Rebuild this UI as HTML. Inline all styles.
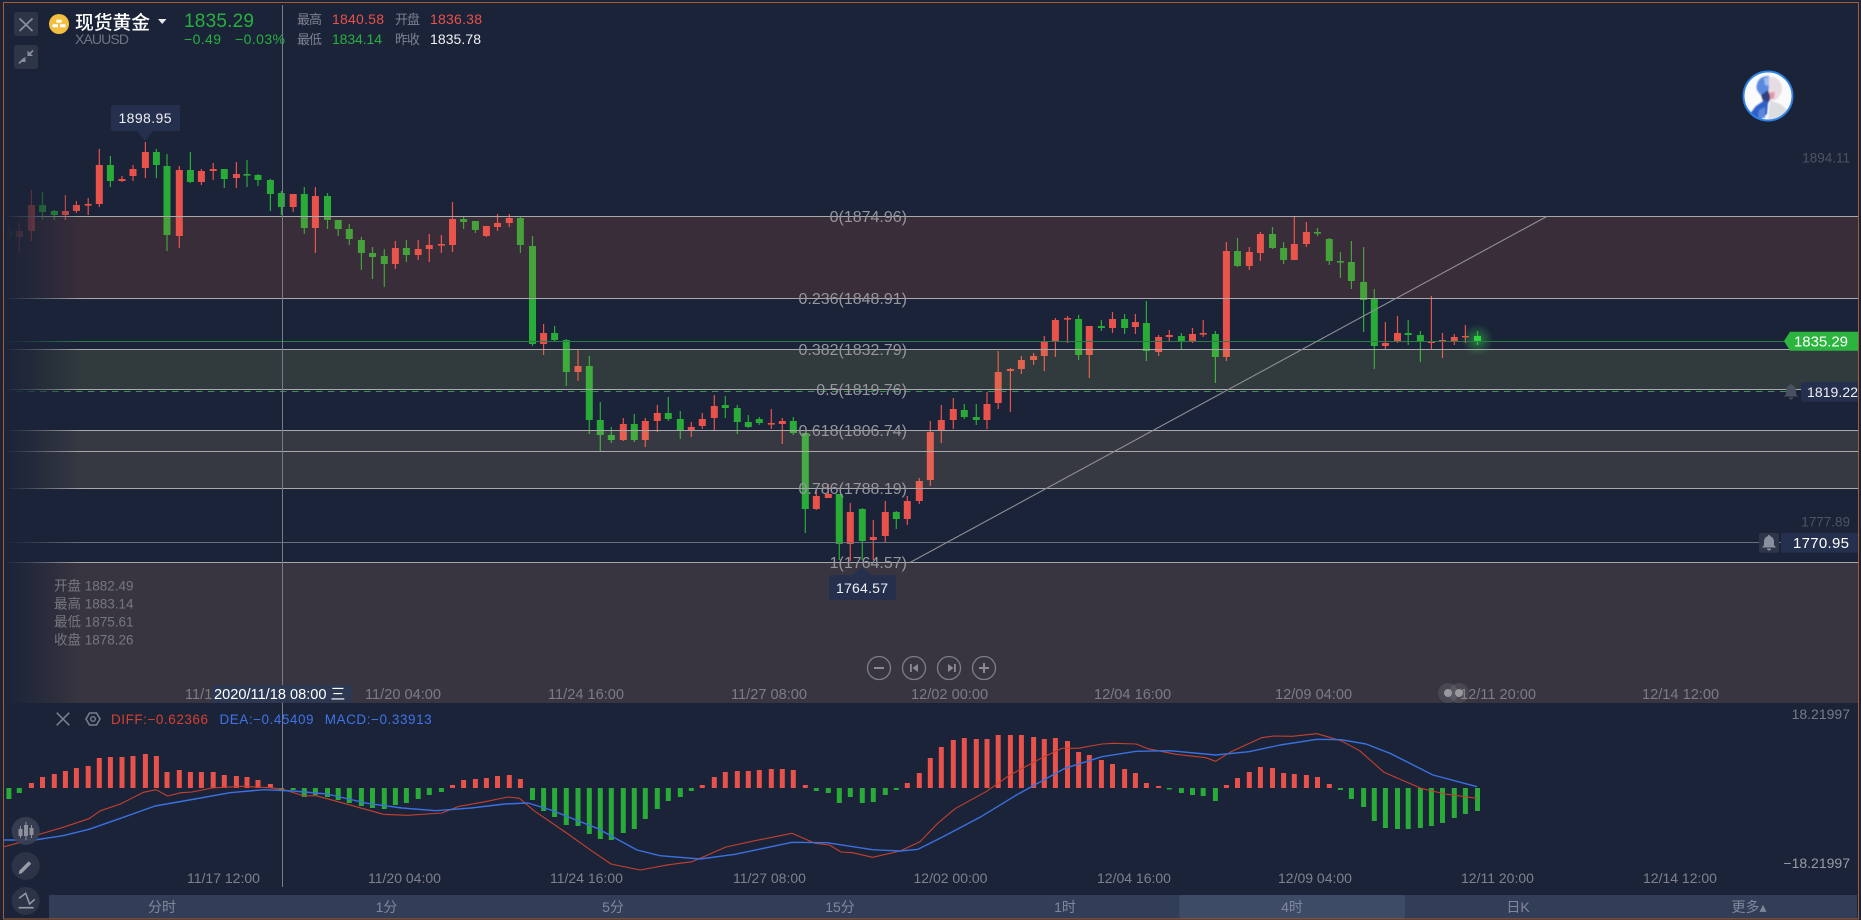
<!DOCTYPE html>
<html lang="zh">
<head>
<meta charset="utf-8">
<title>现货黄金</title>
<style>
html,body{margin:0;padding:0;background:#1b2338;width:1861px;height:920px;overflow:hidden}
svg{display:block;font-family:"Liberation Sans","Noto Sans CJK SC",sans-serif}
.wr{stroke:#e9524a;stroke-width:1.2;fill:none}
.wg{stroke:#28ab37;stroke-width:1.2;fill:none}
.br{stroke:#e9524a;stroke-width:7;fill:none}
.bg{stroke:#28ab37;stroke-width:7;fill:none}
.fib{stroke:#a9a9a9;stroke-width:1;fill:none}
.fl{font-size:16px;fill:#96969c;text-anchor:end}
.ax{font-size:14.6px;fill:#7c7c85}
.ax2{font-size:14px;fill:#7e818d}
.tab{font-size:14px;fill:#81879a;text-anchor:middle}
.h{font-size:13px;fill:#7d8191}
.n{font-size:14px}
.lg{font-size:13.5px;fill:#77777f}
</style>
</head>
<body>
<svg width="1861" height="920" viewBox="0 0 1861 920" xmlns="http://www.w3.org/2000/svg">
<defs>
<linearGradient id="fade" x1="0" x2="1" y1="0" y2="0"><stop offset="0" stop-color="#1b2338"/><stop offset=".35" stop-color="#1b2338" stop-opacity=".7"/><stop offset="1" stop-color="#1b2338" stop-opacity="0"/></linearGradient>
<radialGradient id="glow"><stop offset="0" stop-color="#35e04a" stop-opacity=".5"/><stop offset=".5" stop-color="#35e04a" stop-opacity=".22"/><stop offset="1" stop-color="#35e04a" stop-opacity="0"/></radialGradient>
<clipPath id="av"><circle cx="1768" cy="96" r="24"/></clipPath>
<filter id="soft" x="-20%" y="-20%" width="140%" height="140%"><feGaussianBlur stdDeviation="0.9"/></filter>
</defs>
<rect width="1861" height="920" fill="#1b2338"/>

<!-- candles -->
<path class="wg" d="M9 225V241M42.5 192V220M54.3 210V220M110.4 156V187M156.4 149V178M167 154V251M190.4 152V183M224.3 169V188M247 160V187M258 174V186M270.4 179V211M281.4 191V215M304.3 187V234M327.5 193V229M338.2 220V236M349.3 224V245M361.4 237V270M372.5 247V279M384.3 249V287M406.4 240V262M463.6 217V229M475.4 221V233M520.4 217V253M532.5 236V346M554.6 326V342M566.3 339V386M589.3 356V434M600.3 402V451M611.3 427V443M634.3 414V442M668.3 397V421M680.3 411V439M725.3 396V418M737.3 405V434M748.3 415V428M759.3 417V425M793.3 417V435M805.3 433V533M839.3 494V560M862.3 508V560M896.3 511V529M964.3 404V419M976.3 404V425M1078.6 315V360M1101.4 320V331M1124.6 314V334M1146.4 301V361M1181.4 333V349M1215.4 331V383M1237.5 238V267M1272.5 227V249M1283.6 242V264M1317.5 228V236M1329.3 238V265M1340.4 252V278M1351.4 241V289M1363.6 247V332M1374.3 289V369M1408.2 320V345M1420.4 331V362M1477.5 331V345"/>
<path class="bg" d="M9 231V237M42.5 205V212M54.3 211V215M110.4 165V181M156.4 152V165M167 166V235M190.4 170V182M224.3 169V179M247 174V175.6M258 175V180M270.4 180V194M281.4 193V207M304.3 194V228M327.5 196V220M338.2 220V229M349.3 229V239M361.4 240V253M372.5 253V257M384.3 256V264M406.4 248V255M463.6 219V222M475.4 221V230M520.4 218V245M532.5 246V344M554.6 333V340M566.3 340V372M589.3 366V420M600.3 420V435M611.3 435V440M634.3 424V440M668.3 413V419M680.3 419V430M725.3 405V408M737.3 408V422M748.3 422V427M759.3 419V423M793.3 421V433M805.3 433V509M839.3 494V544M862.3 509V541M896.3 512V519M964.3 410V417M976.3 417V420M1078.6 319V355M1101.4 326V328M1124.6 319V328M1146.4 323V351M1181.4 336V341M1215.4 334V357M1237.5 251V266M1272.5 234V248M1283.6 248V260M1317.5 232V233.6M1329.3 239V261M1340.4 261V262.6M1351.4 262V281M1363.6 282V300M1374.3 299V346M1408.2 333V335M1420.4 335V342"/>
<path class="wr" d="M19.3 223V253M31.4 190V241M65.4 195V220M76.4 201V213M88.2 198V215M99.3 149V207M122 176V182M133 165V181M145.4 142V178M179.3 166V248M201.4 169V185M213.2 163V180M236.4 162V188M293.2 194V212M315.4 187V253M395.4 241V269M418.2 240V260M429.3 234V262M441.4 235V253M452.5 202V252M486.4 226V237M497.5 214V231M509.3 214V227M543.6 324V355M578 350V381M623.3 418V441M645.3 418V447M657.3 405V432M691.3 422V437M702.3 413V429M714.3 395V430M771.3 409V429M782.3 418V444M816.3 490V510M828.3 484V498M850.3 503V561M873.3 520V560M885.3 501V542M907.3 496V525M919.3 478V504M930.3 421V486M941.3 405V443M953.3 398V429M987 392V429M998.2 351V409M1010.4 368V412M1021.4 356V374M1033.6 353V365M1044.3 336V371M1055.4 318V357M1067.5 316V343M1089.3 326V378M1112.5 312V333M1135.4 314V334M1158.6 335V356M1169.3 330V341M1192.5 328V343M1203.2 320V337M1226.4 242V361M1249.3 247V270M1260.4 232V261M1294.3 217V260M1306.4 222V247M1385.4 322V349M1397.5 316V343M1431.4 296V349M1442.5 333V358M1454.3 334V345M1465.4 325V343"/>
<path class="br" d="M19.3 231V237M31.4 205V231M65.4 211V215M76.4 205V211M88.2 204V205.6M99.3 165V204M122 179V181M133 169V176M145.4 152V168M179.3 170V236M201.4 171V182M213.2 169V171M236.4 174V178M293.2 194V207M315.4 196V228M395.4 248V264M418.2 249V255M429.3 245V249M441.4 244V245.6M452.5 219V245M486.4 226V236M497.5 223V227M509.3 218V223M543.6 333V344M578 366V372M623.3 424V440M645.3 421V440M657.3 413V421M691.3 427V430M702.3 419V426M714.3 406V418M771.3 423V424.6M782.3 421V424M816.3 496V509M828.3 494V498M850.3 512V544M873.3 537V540M885.3 512V536M907.3 501V519M919.3 481V501M930.3 432V480M941.3 420V430M953.3 409V420M987 404V420M998.2 372V403M1010.4 369V371M1021.4 360V369M1033.6 356V360M1044.3 342V356M1055.4 320V342M1067.5 318V319.6M1089.3 326V355M1112.5 319V328M1135.4 322V327M1158.6 337V352M1169.3 335V337M1192.5 334V341M1203.2 333V334.6M1226.4 251V357M1249.3 252V266M1260.4 234V253M1294.3 244V260M1306.4 232V244M1385.4 343V346M1397.5 333V342M1431.4 341V343M1442.5 340V341.4M1454.3 337V341M1465.4 336V337.4"/>
<circle cx="1477.5" cy="340" r="16" fill="url(#glow)"/>
<path d="M1474 336H1481V342H1474Z" fill="#2ed13f"/>

<!-- bands -->
<rect x="4" y="216" width="1855" height="82" fill="rgb(234,108,76)" fill-opacity=".15"/>
<rect x="4" y="349" width="1855" height="40" fill="rgb(180,195,96)" fill-opacity=".15"/>
<rect x="4" y="430" width="1855" height="58" fill="rgb(220,188,129)" fill-opacity=".15"/>
<rect x="4" y="562" width="1855" height="141" fill="rgb(227,162,116)" fill-opacity=".15"/>

<!-- lines -->
<path d="M4 341.5H1786" stroke="#2c7d4a" stroke-width="1" fill="none"/>
<path d="M4 391.5H1786" stroke="#3e8e4f" stroke-width="1" stroke-dasharray="6.5 5.5" fill="none"/>
<path d="M4 542.5H1759M1779 542.5H1781" stroke="#6a7080" stroke-width="1" fill="none"/>
<path class="fib" d="M4 216.5H1859M4 298.5H1859M4 349.5H1859M4 389.5H1859M4 430.5H1859M4 451.5H1859M4 488.5H1859M4 562.5H1859"/>
<path d="M910 562.5L1546.7 216.5" stroke="#8f8f93" stroke-width="1.1" fill="none"/>

<!-- fib labels -->
<text class="fl" x="907" y="222">0(1874.96)</text>
<text class="fl" x="907" y="304">0.236(1848.91)</text>
<text class="fl" x="907" y="355">0.382(1832.79)</text>
<text class="fl" x="907" y="395">0.5(1819.76)</text>
<text class="fl" x="907" y="436">0.618(1806.74)</text>
<text class="fl" x="907" y="494">0.786(1788.19)</text>
<text class="fl" x="907" y="568">1(1764.57)</text>

<!-- left fade -->
<rect x="4" y="170" width="78" height="533" fill="url(#fade)"/>

<!-- MACD panel -->
<rect x="4" y="703" width="1855" height="217" fill="#1b2338"/>
<path d="M31.4 788V783M42.5 788V777M54.3 788V774M65.4 788V771M76.4 788V768M88.2 788V766M99.3 788V758M110.4 788V757M122 788V757M133 788V756M145.4 788V754M156.4 788V756M167 788V772M179.3 788V770M190.4 788V772M201.4 788V772M213.2 788V772M224.3 788V775M236.4 788V776M247 788V777M258 788V780M270.4 788V784M452.5 788V785M463.6 788V780M475.4 788V779M486.4 788V778M497.5 788V776M509.3 788V775M520.4 788V779M702.3 788V785M714.3 788V777M725.3 788V772M737.3 788V771M748.3 788V771M759.3 788V770M771.3 788V769M782.3 788V769M793.3 788V770M805.3 788V785M907.3 788V783M919.3 788V773M930.3 788V758M941.3 788V747M953.3 788V740M964.3 788V738M976.3 788V739M987 788V739M998.2 788V735M1010.4 788V735M1021.4 788V735M1033.6 788V737M1044.3 788V739M1055.4 788V738M1067.5 788V741M1078.6 788V752M1089.3 788V755M1101.4 788V760M1112.5 788V764M1124.6 788V769M1135.4 788V773M1146.4 788V783M1158.6 788V786M1226.4 788V785M1237.5 788V778M1249.3 788V772M1260.4 788V767M1272.5 788V768M1283.6 788V773M1294.3 788V774M1306.4 788V775M1317.5 788V777M1329.3 788V784" stroke="#e9524a" stroke-width="5" fill="none"/>
<path d="M8.9 788V799M19.3 788V793M281.4 788V790M293.2 788V790M304.3 788V797M315.4 788V795M327.5 788V797M338.2 788V800M349.3 788V803M361.4 788V806M372.5 788V808M384.3 788V809M395.4 788V805M406.4 788V803M418.2 788V799M429.3 788V795M441.4 788V792M532.5 788V800M543.6 788V811M554.6 788V817M566.3 788V825M578 788V826M589.3 788V834M600.3 788V839M611.3 788V840M623.3 788V833M634.3 788V829M645.3 788V819M657.3 788V809M668.3 788V801M680.3 788V797M691.3 788V791M816.3 788V791M828.3 788V793M839.3 788V803M850.3 788V797M862.3 788V803M873.3 788V802M885.3 788V795M896.3 788V790M1169.3 788V789.5M1181.4 788V793M1192.5 788V795M1203.2 788V796M1215.4 788V801M1340.4 788V790M1351.4 788V799M1363.6 788V807M1374.3 788V821M1385.4 788V828M1397.5 788V829M1408.2 788V829M1420.4 788V828M1431.4 788V826M1442.5 788V823M1454.3 788V818M1465.4 788V814M1477.5 788V811" stroke="#28ab37" stroke-width="5" fill="none"/>
<polyline fill="none" stroke="#c5402f" stroke-width="1.1" stroke-linejoin="round" points="3,847 23,841.7 37,835 63,827.3 89,818.7 100.5,810.7 120.5,804 143.5,792.3 156,789.7 167.6,796 181,792.7 192,792 212,788 241,786.3 270,787.7 284,789.7 304,796 316,795.7 344,803.3 383.5,814.3 407.6,815.3 442,813 459,806.3 482,802.3 508,797 519.5,798.3 534,810.7 568,834 588,848.3 611,864 640,870 669,864.7 692,861.7 726,847 755,840.7 792,833.3 815,843.3 829.5,845 841,852 852.5,852.7 872.6,857.3 900,851 920,841.7 937,824 955,808.7 986,791.7 1010,775 1041,758.3 1062,748.3 1078,748.3 1102,744 1114,743.3 1136,744 1148,748.7 1176,754.3 1206,757.7 1215.6,761.3 1231,751.7 1261.5,737.7 1274,736 1292,736.3 1317,733.7 1341,740.7 1359.6,750.7 1384,772.3 1421,788.3 1445,794 1477,798.3"/>
<polyline fill="none" stroke="#3a70e0" stroke-width="1.4" stroke-linejoin="round" points="3,840 34.4,840 63,835.7 89,829.3 120.5,818.3 155,806 195,799 230,792.7 264,789.7 293,791 327,794 367,803.3 402,808 436,810.7 471,808 505,804 528,803 551,810 597,828.3 637,850 660,855.7 700,859 735,854.3 792,842.3 827,842.7 872.6,849.7 900,851 918,849.3 943,836.7 980,817.3 1016,795.3 1065,768.3 1102,756.7 1136,751.3 1170,750.7 1215.6,755 1249,751.7 1280,745 1317,739.3 1341,739.7 1366,744 1390,753.3 1433,775 1477,786.7"/>

<!-- crosshair -->
<path d="M282.5 5V887" stroke="#777c8a" stroke-width="1" fill="none"/>

<!-- header -->
<rect x="14" y="12" width="24" height="24" rx="2.5" fill="#2e3547"/>
<path d="M19.5 18.5L32.5 31M32.5 18.5L19.5 31" stroke="#8d909d" stroke-width="1.6" fill="none"/>
<rect x="14" y="45" width="24" height="24" rx="2.5" fill="#2e3547"/>
<path d="M19 63.5L24 58.5M33 50.5L29 54.5" stroke="#8a8e9c" stroke-width="1.6" fill="none"/>
<path d="M25.5 56.5V62H20.5ZM27.5 50.5V56H33Z" fill="#8a8e9c"/>
<circle cx="59" cy="24" r="10" fill="#f2c03e"/>
<path d="M56.3 19.7H61.7V22.6H56.3ZM52.5 24.2H58V27.2H52.5ZM60 24.2H65.5V27.2H60Z" fill="#fff"/>
<text x="75" y="29" font-size="18.8" font-weight="500" fill="#fff" textLength="75">现货黄金</text>
<path d="M158 19H166.5L162.2 24Z" fill="#e8e8ee"/>
<text x="75" y="44" font-size="14" fill="#6f7485" textLength="54">XAUUSD</text>
<text x="184" y="27" font-size="19" fill="#27b03f" textLength="70">1835.29</text>
<text x="184" y="44" font-size="14" fill="#27b03f" textLength="37">−0.49</text>
<text x="235" y="44" font-size="14" fill="#27b03f" textLength="50">−0.03%</text>
<text class="h" x="297" y="24" textLength="25">最高</text>
<text class="n" x="332" y="24" fill="#e9524a" textLength="52">1840.58</text>
<text class="h" x="395" y="24" textLength="25">开盘</text>
<text class="n" x="430" y="24" fill="#e9524a" textLength="52">1836.38</text>
<text class="h" x="297" y="44" textLength="25">最低</text>
<text class="n" x="332" y="44" fill="#27b03f" textLength="50">1834.14</text>
<text class="h" x="395" y="44" textLength="25">昨收</text>
<text class="n" x="430" y="44" fill="#f2f2f5" textLength="51">1835.78</text>

<!-- tooltips -->
<path d="M113 105H178Q180 105 180 107V129Q180 131 178 131H153L145 141L137 131H113Q111 131 111 129V107Q111 105 113 105Z" fill="#24304d"/>
<text x="118.500" y="123" font-size="14" fill="#f0f0f5" textLength="53">1898.95</text>
<path d="M831 575H853L862 567L871 575H894Q896 575 896 577V598Q896 600 894 600H831Q829 600 829 598V577Q829 575 831 575Z" fill="#24304d"/>
<text x="836" y="593" font-size="14" fill="#f0f0f5" textLength="52">1764.57</text>

<!-- avatar -->
<circle cx="1768" cy="96" r="24" fill="#fbfbfd"/>
<g clip-path="url(#av)"><g filter="url(#soft)">
<path d="M1769 77Q1780 76 1782 88Q1782 96 1775 100H1769Z" fill="#e6dde3"/>
<path d="M1757 84Q1759 76 1769 76V88L1767 97L1761 95Q1755 90 1757 84Z" fill="#5a8ae0"/>
<path d="M1764 78L1769 77V86L1765 85Z" fill="#9fbdf0"/>
<path d="M1761 95L1768 90L1771 98L1768 103L1763 101Z" fill="#33407e"/>
<path d="M1770 92L1775 92L1774 99L1770 99Z" fill="#e79aa5"/>
<path d="M1749 115L1756 106L1765 100L1768 103L1767 114L1760 120L1752 118Z" fill="#2d5fc8"/>
<path d="M1759 110L1765 107L1765 118L1758 118Z" fill="#5b87dc"/>
<path d="M1770 100L1782 105L1789 112L1786 120H1768Z" fill="#dcdde0"/>
</g></g>
<circle cx="1768" cy="96" r="24.500" fill="none" stroke="#2d82e6" stroke-width="2"/>

<!-- right price labels -->
<text x="1850" y="162.500" font-size="13.500" fill="#4d5365" text-anchor="end">1894.11</text>
<text x="1850" y="526.500" font-size="13.500" fill="#4d5365" text-anchor="end">1777.89</text>
<path d="M1784 341L1790 331.700H1858V350.700H1790Z" fill="#2bb53e"/>
<text x="1794" y="346.500" font-size="15" fill="#fff" textLength="54">1835.29</text>
<path d="M1803 382H1858V401.700H1803Q1801 401.700 1801 399.700V384Q1801 382 1803 382Z" fill="#24304d"/>
<text x="1807" y="397" font-size="14" fill="#f0f0f5" textLength="51">1819.22</text>
<g transform="translate(1791,392)"><path d="M0-8a1.300 1.300 0 0 1 1.300 1.300C4-6 5-3.500 5-1V2L7 4.500H-7L-5 2V-1C-5-3.500-4-6-1.300-6.700A1.300 1.300 0 0 1 0-8ZM-2 5.500H2A2 2 0 0 1-2 5.500Z" fill="#4b5060"/></g>
<rect x="1759" y="533" width="20" height="19.700" rx="2.500" fill="#2e3548"/>
<g transform="translate(1769,543)"><path d="M0-8a1.300 1.300 0 0 1 1.300 1.300C4-6 5-3.500 5-1V2L7 4.500H-7L-5 2V-1C-5-3.500-4-6-1.300-6.700A1.300 1.300 0 0 1 0-8ZM-2 5.500H2A2 2 0 0 1-2 5.500Z" fill="#8a8f9e"/></g>
<rect x="1781" y="533" width="77" height="19.700" fill="#24304d"/>
<text x="1793" y="548" font-size="15" fill="#fff" textLength="56">1770.95</text>

<!-- legend -->
<text class="lg" x="54" y="590.500">开盘 1882.49</text>
<text class="lg" x="54" y="608.500">最高 1883.14</text>
<text class="lg" x="54" y="626.500">最低 1875.61</text>
<text class="lg" x="54" y="644.500">收盘 1878.26</text>

<!-- zoom buttons -->
<g fill="none" stroke="#7d7d85" stroke-width="1.300">
<circle cx="879" cy="668" r="11.500"/><circle cx="914" cy="668" r="11.500"/><circle cx="949" cy="668" r="11.500"/><circle cx="984" cy="668" r="11.500"/>
</g>
<path d="M874 668H884M979 668H989M984 663V673" stroke="#8a8a90" stroke-width="2" fill="none"/>
<path d="M910 664H911.800V672H910ZM918 664V672L912.500 668ZM948 664V672L953.500 668ZM954 664H955.800V672H954Z" fill="#8a8a90"/>

<!-- main time axis -->
<text class="ax" x="185" y="699">11/1</text>
<text class="ax" x="365" y="699">11/20 04:00</text>
<text class="ax" x="548" y="699">11/24 16:00</text>
<text class="ax" x="731" y="699">11/27 08:00</text>
<text class="ax" x="911" y="699">12/02 00:00</text>
<text class="ax" x="1094" y="699">12/04 16:00</text>
<text class="ax" x="1275" y="699">12/09 04:00</text>
<text class="ax" x="1460" y="699">12/11 20:00</text>
<text class="ax" x="1642" y="699">12/14 12:00</text>
<rect x="212" y="685" width="140" height="17.500" fill="#2d3853"/>
<text x="214" y="699" font-size="14.600" fill="#fff">2020/11/18 08:00 三</text>
<circle cx="1448" cy="693" r="10" fill="#fff" fill-opacity=".09"/>
<circle cx="1459" cy="693" r="10" fill="#fff" fill-opacity=".09"/>
<circle cx="1448" cy="693" r="4" fill="#98989e"/>
<circle cx="1459" cy="693" r="4" fill="#98989e"/>

<!-- MACD legend -->
<path d="M56.700 712.700L69.300 725.300M69.300 712.700L56.700 725.300" stroke="#7b7f8f" stroke-width="1.500" fill="none"/>
<path d="M86 719L89.500 713H96.500L100 719L96.500 725H89.500Z" stroke="#7b7f8f" stroke-width="1.500" fill="none"/>
<circle cx="93" cy="719" r="2.300" stroke="#7b7f8f" stroke-width="1.400" fill="none"/>
<text x="111" y="724" font-size="13.500" fill="#d6412f" textLength="97">DIFF:−0.62366</text>
<text x="219.500" y="724" font-size="13.500" fill="#3f73e8" textLength="94">DEA:−0.45409</text>
<text x="324.700" y="724" font-size="13.500" fill="#3f73e8" textLength="107">MACD:−0.33913</text>
<text x="1850" y="719" font-size="14" fill="#77798a" text-anchor="end">18.21997</text>
<text x="1850" y="868" font-size="14" fill="#9a9ca5" text-anchor="end">−18.21997</text>

<!-- MACD time axis -->
<text class="ax2" x="187" y="883">11/17 12:00</text>
<text class="ax2" x="368" y="883">11/20 04:00</text>
<text class="ax2" x="550" y="883">11/24 16:00</text>
<text class="ax2" x="733" y="883">11/27 08:00</text>
<text class="ax2" x="913.500" y="883">12/02 00:00</text>
<text class="ax2" x="1097" y="883">12/04 16:00</text>
<text class="ax2" x="1278" y="883">12/09 04:00</text>
<text class="ax2" x="1461" y="883">12/11 20:00</text>
<text class="ax2" x="1643" y="883">12/14 12:00</text>

<!-- tab bar -->
<rect x="49" y="895" width="1808" height="24" fill="#323e58"/>
<rect x="1179.400" y="895" width="225.600" height="24" rx="3" fill="#3e4b67"/>
<text class="tab" x="162" y="912">分时</text>
<text class="tab" x="386.500" y="912">1分</text>
<text class="tab" x="613" y="912">5分</text>
<text class="tab" x="840" y="912">15分</text>
<text class="tab" x="1065" y="912">1时</text>
<text class="tab" x="1292" y="912">4时</text>
<text class="tab" x="1518" y="912">日K</text>
<text class="tab" x="1749" y="912">更多▴</text>

<!-- round tool buttons -->
<circle cx="25.700" cy="831" r="14" fill="#3a4054" fill-opacity=".9"/>
<circle cx="25.700" cy="866" r="14" fill="#2d3447"/>
<circle cx="25.700" cy="901" r="14" fill="#2d3447"/>
<path d="M20.500 826V838M26 822V840M31.500 825V838" stroke="#8d909d" stroke-width="1" fill="none"/>
<path d="M20.500 829V836M26 825V836M31.500 828V835" stroke="#8d909d" stroke-width="4" fill="none"/>
<path d="M20.500 872L30 862.500" stroke="#9a9da8" stroke-width="3.600" fill="none"/>
<path d="M18.800 874L19.300 870.700L21.800 873.200Z" fill="#9a9da8"/>
<path d="M19 898.300L25.700 893.300L29.600 904L34.800 899.300" stroke="#9a9da8" stroke-width="1.500" fill="none"/>
<path d="M18.600 907.700H33.600" stroke="#9a9da8" stroke-width="1.600" fill="none"/>

<!-- outer border -->
<rect x="3.500" y="2.500" width="1855" height="916.500" fill="none" stroke="#a85c2c" stroke-width="1"/>
</svg>
</body>
</html>
